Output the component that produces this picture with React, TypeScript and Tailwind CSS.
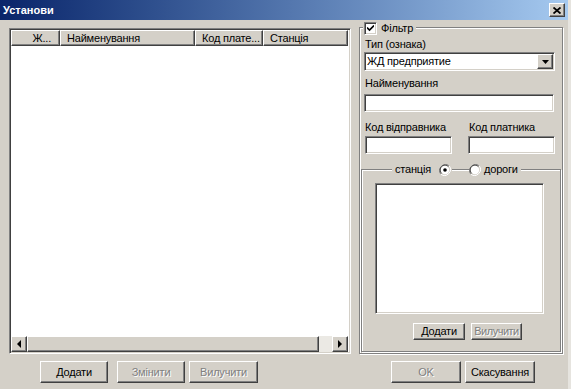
const raised =
  "border border-t-white border-l-white border-r-[#404040] border-b-[#404040] shadow-[inset_-1px_-1px_0_#808080]";
const sunken =
  "border border-t-[#808080] border-l-[#808080] border-r-white border-b-white shadow-[inset_1px_1px_0_#404040,inset_-1px_-1px_0_#d4d0c8]";
const etched = "border border-[#808080] shadow-[inset_1px_1px_0_#fff,1px_1px_0_#fff]";
const disabledText = "text-[#808080] [text-shadow:1px_1px_0_#fff]";

function Btn({ label, className, disabled }: { label: string; className: string; disabled?: boolean }) {
  return (
    <div className={`${raised} ${className} flex items-center justify-center whitespace-nowrap bg-[#d4d0c8] ${disabled ? disabledText : "text-black"}`}>
      {label}
    </div>
  );
}

function Arrow({ dir }: { dir: "left" | "right" | "down" }) {
  const pts = dir === "left" ? "4,0 4,8 0,4" : dir === "right" ? "0,0 0,8 4,4" : "0,0 7,0 3.5,4";
  const w = dir === "down" ? 7 : 4;
  const h = dir === "down" ? 4 : 8;
  return (
    <svg width={w} height={h} viewBox={`0 0 ${w} ${h}`}>
      <polygon points={pts} fill="#000" />
    </svg>
  );
}

function Radio({ checked }: { checked?: boolean }) {
  return (
    <svg width="12" height="12" viewBox="0 0 12 12" className="shrink-0">
      <path d="M10.2 1.8A6 6 0 0 0 1.8 10.2" fill="none" stroke="#808080" strokeWidth="1" />
      <path d="M9.4 2.6A4.8 4.8 0 0 0 2.6 9.4" fill="none" stroke="#404040" strokeWidth="1" />
      <circle cx="6" cy="6" r="4.2" fill="#fff" />
      <path d="M1.8 10.2A6 6 0 0 0 10.2 1.8" fill="none" stroke="#fff" strokeWidth="1" />
      {checked && <circle cx="6" cy="6" r="1.8" fill="#000" />}
    </svg>
  );
}

function Checkbox() {
  return (
    <div className={`${sunken} w-[13px] h-[13px] bg-white flex items-center justify-center shrink-0`}>
      <svg width="7" height="7" viewBox="0 0 7 7">
        <path d="M0 2.5 L2.5 5 L7 0.5" fill="none" stroke="#000" strokeWidth="1.6" />
      </svg>
    </div>
  );
}

const cols = [
  { label: "Ж...", w: "w-[49px]", right: true },
  { label: "Найменування", w: "w-[135px]" },
  { label: "Код плате...", w: "w-[68px]" },
  { label: "Станція", w: "w-[85px]" },
];

export default function App() {
  return (
    <div className="w-[571px] h-[389px] bg-[#d4d0c8] flex flex-col overflow-hidden text-[11px] tracking-[-0.2px] text-black font-['Liberation_Sans',Arial,sans-serif] border-r-[3px] border-r-[#e6e4df]">
      <div className="h-[20px] shrink-0 flex items-center justify-between bg-gradient-to-r from-[#0a246a] to-[#a6caf0] pl-[3px] pr-[3px]">
        <span className="text-white font-bold text-[11px] tracking-normal">Установи</span>
        <div className={`${raised} w-[16px] h-[14px] bg-[#d4d0c8] flex items-center justify-center`}>
          <svg width="8" height="7" viewBox="0 0 8 7">
            <path d="M0.5 0.5 L7.5 6.5 M7.5 0.5 L0.5 6.5" stroke="#000" strokeWidth="1.8" />
          </svg>
        </div>
      </div>

      <div className="flex h-[335px] shrink-0">
        <div className={`${sunken} ml-[9px] mt-[8px] w-[342px] h-[326px] bg-white flex flex-col`}>
          <div className="flex h-[16px] shrink-0 ml-[1px] mt-[1px]">
            {cols.map((c) => (
              <div
                key={c.label}
                className={`${raised} ${c.w} h-[16px] bg-[#d4d0c8] flex items-center whitespace-nowrap overflow-hidden ${c.right ? "justify-end pr-[8px]" : "pl-[6px]"}`}
              >
                {c.label}
              </div>
            ))}
          </div>
          <div className="flex-1" />
          <div className="flex h-[16px] shrink-0 ml-[1px] mb-[1px]">
            <div className={`${raised} w-[16px] h-[16px] bg-[#d4d0c8] flex items-center justify-center`}>
              <Arrow dir="left" />
            </div>
            <div className={`${raised} w-[292px] h-[16px] bg-[#d4d0c8]`} />
            <div className="w-[13px] h-[16px] bg-[#ebe9e4]" />
            <div className={`${raised} w-[16px] h-[16px] bg-[#d4d0c8] flex items-center justify-center`}>
              <Arrow dir="right" />
            </div>
          </div>
        </div>

        <div className={`${etched} relative ml-[8px] mt-[7px] w-[204px] h-[327px] flex flex-col`}>
          <div className="absolute left-[3px] -top-[6px] bg-[#d4d0c8] flex items-center gap-[4px] pl-[1px] pr-[3px] h-[13px]">
            <Checkbox />
            <span>Фільтр</span>
          </div>

          <div className="mt-[10px] ml-[5px] h-[13px] leading-[13px]">Тип (ознака)</div>
          <div className={`${sunken} mt-[1px] ml-[4px] w-[191px] h-[19px] bg-white flex items-center justify-between`}>
            <span className="pl-[2px]">ЖД предприятие</span>
            <div className={`${raised} w-[16px] h-[15px] bg-[#d4d0c8] flex items-center justify-center mr-[1px]`}>
              <Arrow dir="down" />
            </div>
          </div>

          <div className="mt-[6px] ml-[5px] h-[13px] leading-[13px]">Найменування</div>
          <div className={`${sunken} mt-[4px] ml-[4px] w-[190px] h-[18px] bg-white`} />

          <div className="mt-[9px] flex h-[13px] leading-[13px]">
            <div className="ml-[5px] w-[104px]">Код відправника</div>
            <div>Код платника</div>
          </div>
          <div className="mt-[2px] flex">
            <div className={`${sunken} ml-[5px] w-[87px] h-[18px] bg-white`} />
            <div className={`${sunken} ml-[16px] w-[87px] h-[18px] bg-white`} />
          </div>

          <div className={`${etched} relative mt-[15px] mx-[1px] h-[183px] flex flex-col`}>
            <div className="absolute left-[30px] -top-[7px] h-[13px] bg-[#d4d0c8] flex items-center pl-[3px] pr-[1px]">
              <span>станція</span>
              <span className="ml-[8px]">
                <Radio checked />
              </span>
            </div>
            <div className="absolute left-[107px] -top-[7px] h-[13px] bg-[#d4d0c8] flex items-center pr-[3px]">
              <Radio />
              <span className="ml-[3px]">дороги</span>
            </div>

            <div className={`${sunken} mt-[13px] ml-[13px] w-[169px] h-[131px] bg-white`} />
            <div className="mt-[9px] ml-[51px] flex gap-[6px]">
              <Btn label="Додати" className="w-[52px] h-[17px]" />
              <Btn label="Вилучити" className="w-[51px] h-[17px] tracking-[-0.5px]" disabled />
            </div>
          </div>
        </div>
      </div>

      <div className="flex mt-[6px] h-[22px]">
        <Btn label="Додати" className="ml-[40px] w-[68px] h-[22px]" />
        <Btn label="Змінити" className="ml-[9px] w-[68px] h-[22px]" disabled />
        <Btn label="Вилучити" className="ml-[4px] w-[69px] h-[22px]" disabled />
        <Btn label="OK" className="ml-[133px] w-[70px] h-[22px]" disabled />
        <Btn label="Скасування" className="ml-[4px] w-[70px] h-[22px]" />
      </div>
    </div>
  );
}
